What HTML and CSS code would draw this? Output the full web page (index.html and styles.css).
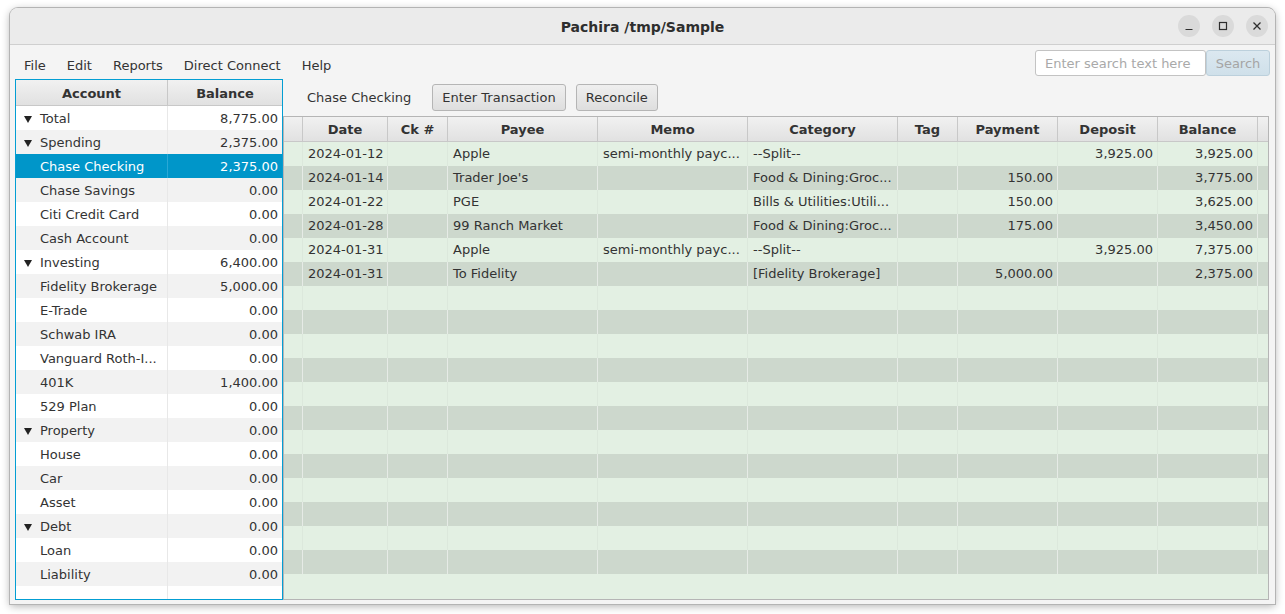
FILE: index.html
```html
<!DOCTYPE html>
<html>
<head>
<meta charset="utf-8">
<link rel="stylesheet" href="styles.css">
</head>
<body>
<div class="window">
  <div class="titlebar">
    <div class="title">Pachira /tmp/Sample</div>
    <div class="wbtns">
      <span class="wbtn"><svg width="10" height="10" viewBox="0 0 10 10"><path d="M1.5 8.5h7" stroke="#2e2e2e" stroke-width="1.2"/></svg></span>
      <span class="wbtn"><svg width="10" height="10" viewBox="0 0 10 10"><rect x="1.5" y="1.5" width="7" height="7" fill="none" stroke="#2e2e2e" stroke-width="1.2"/></svg></span>
      <span class="wbtn"><svg width="10" height="10" viewBox="0 0 10 10"><path d="M1.5 1.5l7 7M8.5 1.5l-7 7" stroke="#2e2e2e" stroke-width="1.3"/></svg></span>
    </div>
  </div>
  <div class="menubar">
    <div class="menus">
      <span class="menu">File</span>
      <span class="menu">Edit</span>
      <span class="menu">Reports</span>
      <span class="menu">Direct Connect</span>
      <span class="menu">Help</span>
    </div>
    <div class="search">
      <div class="field">Enter search text here</div>
      <div class="sbtn">Search</div>
    </div>
  </div>
  <div class="main">
    <div class="tree">
      <div class="thead"><div class="th">Account</div><div class="th">Balance</div></div>
      <div class="tbody">
        <div class="trow"><div class="tc name"><span class="tri"></span>Total</div><div class="tc num">8,775.00</div></div>
        <div class="trow"><div class="tc name"><span class="tri"></span>Spending</div><div class="tc num">2,375.00</div></div>
        <div class="trow sel"><div class="tc name">Chase Checking</div><div class="tc num">2,375.00</div></div>
        <div class="trow"><div class="tc name">Chase Savings</div><div class="tc num">0.00</div></div>
        <div class="trow"><div class="tc name">Citi Credit Card</div><div class="tc num">0.00</div></div>
        <div class="trow"><div class="tc name">Cash Account</div><div class="tc num">0.00</div></div>
        <div class="trow"><div class="tc name"><span class="tri"></span>Investing</div><div class="tc num">6,400.00</div></div>
        <div class="trow"><div class="tc name">Fidelity Brokerage</div><div class="tc num">5,000.00</div></div>
        <div class="trow"><div class="tc name">E-Trade</div><div class="tc num">0.00</div></div>
        <div class="trow"><div class="tc name">Schwab IRA</div><div class="tc num">0.00</div></div>
        <div class="trow"><div class="tc name">Vanguard Roth-I...</div><div class="tc num">0.00</div></div>
        <div class="trow"><div class="tc name">401K</div><div class="tc num">1,400.00</div></div>
        <div class="trow"><div class="tc name">529 Plan</div><div class="tc num">0.00</div></div>
        <div class="trow"><div class="tc name"><span class="tri"></span>Property</div><div class="tc num">0.00</div></div>
        <div class="trow"><div class="tc name">House</div><div class="tc num">0.00</div></div>
        <div class="trow"><div class="tc name">Car</div><div class="tc num">0.00</div></div>
        <div class="trow"><div class="tc name">Asset</div><div class="tc num">0.00</div></div>
        <div class="trow"><div class="tc name"><span class="tri"></span>Debt</div><div class="tc num">0.00</div></div>
        <div class="trow"><div class="tc name">Loan</div><div class="tc num">0.00</div></div>
        <div class="trow"><div class="tc name">Liability</div><div class="tc num">0.00</div></div>
        <div class="trow"><div class="tc name"></div><div class="tc num"></div></div>
      </div>
    </div>
    <div class="right">
      <div class="toolbar">
        <span class="acct">Chase Checking</span>
        <span class="btn">Enter Transaction</span>
        <span class="btn">Reconcile</span>
      </div>
      <div class="table">
        <div class="grow ghead">
          <div class="gh"></div><div class="gh">Date</div><div class="gh">Ck #</div><div class="gh">Payee</div><div class="gh">Memo</div><div class="gh">Category</div><div class="gh">Tag</div><div class="gh">Payment</div><div class="gh">Deposit</div><div class="gh">Balance</div><div class="gh"></div>
        </div>
        <div class="grow">
          <div class="gc"></div><div class="gc">2024-01-12</div><div class="gc"></div><div class="gc">Apple</div><div class="gc">semi-monthly payc...</div><div class="gc">--Split--</div><div class="gc"></div><div class="gc r"></div><div class="gc r">3,925.00</div><div class="gc r">3,925.00</div><div class="gc"></div>
        </div>
        <div class="grow">
          <div class="gc"></div><div class="gc">2024-01-14</div><div class="gc"></div><div class="gc">Trader Joe's</div><div class="gc"></div><div class="gc">Food &amp; Dining:Groc...</div><div class="gc"></div><div class="gc r">150.00</div><div class="gc r"></div><div class="gc r">3,775.00</div><div class="gc"></div>
        </div>
        <div class="grow">
          <div class="gc"></div><div class="gc">2024-01-22</div><div class="gc"></div><div class="gc">PGE</div><div class="gc"></div><div class="gc">Bills &amp; Utilities:Utili...</div><div class="gc"></div><div class="gc r">150.00</div><div class="gc r"></div><div class="gc r">3,625.00</div><div class="gc"></div>
        </div>
        <div class="grow">
          <div class="gc"></div><div class="gc">2024-01-28</div><div class="gc"></div><div class="gc">99 Ranch Market</div><div class="gc"></div><div class="gc">Food &amp; Dining:Groc...</div><div class="gc"></div><div class="gc r">175.00</div><div class="gc r"></div><div class="gc r">3,450.00</div><div class="gc"></div>
        </div>
        <div class="grow">
          <div class="gc"></div><div class="gc">2024-01-31</div><div class="gc"></div><div class="gc">Apple</div><div class="gc">semi-monthly payc...</div><div class="gc">--Split--</div><div class="gc"></div><div class="gc r"></div><div class="gc r">3,925.00</div><div class="gc r">7,375.00</div><div class="gc"></div>
        </div>
        <div class="grow">
          <div class="gc"></div><div class="gc">2024-01-31</div><div class="gc"></div><div class="gc">To Fidelity</div><div class="gc"></div><div class="gc">[Fidelity Brokerage]</div><div class="gc"></div><div class="gc r">5,000.00</div><div class="gc r"></div><div class="gc r">2,375.00</div><div class="gc"></div>
        </div>
        <div class="grow"><div class="gc"></div><div class="gc"></div><div class="gc"></div><div class="gc"></div><div class="gc"></div><div class="gc"></div><div class="gc"></div><div class="gc"></div><div class="gc"></div><div class="gc"></div><div class="gc"></div></div>
        <div class="grow"><div class="gc"></div><div class="gc"></div><div class="gc"></div><div class="gc"></div><div class="gc"></div><div class="gc"></div><div class="gc"></div><div class="gc"></div><div class="gc"></div><div class="gc"></div><div class="gc"></div></div>
        <div class="grow"><div class="gc"></div><div class="gc"></div><div class="gc"></div><div class="gc"></div><div class="gc"></div><div class="gc"></div><div class="gc"></div><div class="gc"></div><div class="gc"></div><div class="gc"></div><div class="gc"></div></div>
        <div class="grow"><div class="gc"></div><div class="gc"></div><div class="gc"></div><div class="gc"></div><div class="gc"></div><div class="gc"></div><div class="gc"></div><div class="gc"></div><div class="gc"></div><div class="gc"></div><div class="gc"></div></div>
        <div class="grow"><div class="gc"></div><div class="gc"></div><div class="gc"></div><div class="gc"></div><div class="gc"></div><div class="gc"></div><div class="gc"></div><div class="gc"></div><div class="gc"></div><div class="gc"></div><div class="gc"></div></div>
        <div class="grow"><div class="gc"></div><div class="gc"></div><div class="gc"></div><div class="gc"></div><div class="gc"></div><div class="gc"></div><div class="gc"></div><div class="gc"></div><div class="gc"></div><div class="gc"></div><div class="gc"></div></div>
        <div class="grow"><div class="gc"></div><div class="gc"></div><div class="gc"></div><div class="gc"></div><div class="gc"></div><div class="gc"></div><div class="gc"></div><div class="gc"></div><div class="gc"></div><div class="gc"></div><div class="gc"></div></div>
        <div class="grow"><div class="gc"></div><div class="gc"></div><div class="gc"></div><div class="gc"></div><div class="gc"></div><div class="gc"></div><div class="gc"></div><div class="gc"></div><div class="gc"></div><div class="gc"></div><div class="gc"></div></div>
        <div class="grow"><div class="gc"></div><div class="gc"></div><div class="gc"></div><div class="gc"></div><div class="gc"></div><div class="gc"></div><div class="gc"></div><div class="gc"></div><div class="gc"></div><div class="gc"></div><div class="gc"></div></div>
        <div class="grow"><div class="gc"></div><div class="gc"></div><div class="gc"></div><div class="gc"></div><div class="gc"></div><div class="gc"></div><div class="gc"></div><div class="gc"></div><div class="gc"></div><div class="gc"></div><div class="gc"></div></div>
        <div class="grow"><div class="gc"></div><div class="gc"></div><div class="gc"></div><div class="gc"></div><div class="gc"></div><div class="gc"></div><div class="gc"></div><div class="gc"></div><div class="gc"></div><div class="gc"></div><div class="gc"></div></div>
        <div class="grow"><div class="gc"></div><div class="gc"></div><div class="gc"></div><div class="gc"></div><div class="gc"></div><div class="gc"></div><div class="gc"></div><div class="gc"></div><div class="gc"></div><div class="gc"></div><div class="gc"></div></div>
      </div>
    </div>
  </div>
</div>
</body>
</html>
```
FILE: styles.css
```css
* { box-sizing: border-box; }
html, body { margin: 0; padding: 0; background: #ffffff; }
body {
  font-family: "DejaVu Sans", "Liberation Sans", sans-serif;
  font-size: 13px;
  color: #333333;
  padding: 8px 10px 0 10px;
  height: 614px;
  overflow: hidden;
}
.window {
  width: 1265px;
  height: 596px;
  background: #f4f4f4;
  border-radius: 8px 8px 0 0;
  box-shadow: 0 0 0 1px #b4b4b4, 0 2px 9px rgba(0,0,0,0.32);
  display: flex;
  flex-direction: column;
  overflow: hidden;
}
.titlebar {
  height: 37px;
  flex: none;
  background: #ebebeb;
  border-bottom: 1px solid #cfcfcf;
  display: flex;
  align-items: center;
  justify-content: center;
  position: relative;
  padding-top: 2px;
}
.title { font-weight: bold; font-size: 14px; color: #2e2e2e; }
.wbtns {
  position: absolute;
  right: 7px;
  top: 7px;
  display: flex;
  gap: 12px;
}
.wbtn {
  width: 22px; height: 22px;
  border-radius: 50%;
  background: #dadada;
  display: flex; align-items: center; justify-content: center;
}
.menubar {
  height: 34px;
  flex: none;
  display: flex;
  align-items: flex-start;
  justify-content: space-between;
  padding: 0 5px 0 4px;
}
.menus { display: flex; padding-top: 13px; }
.menu { padding: 0 10.5px; line-height: 16px; }
.menu:first-child { padding-left: 10px; }
.search { display: flex; padding-top: 5px; }
.field {
  width: 171px; height: 26px;
  background: #fff;
  border: 1px solid #c3c3c3;
  border-radius: 3px;
  color: #a9a9a9;
  padding-left: 9px;
  padding-top: 1px;
  line-height: 24px;
}
.sbtn {
  width: 64px; height: 26px;
  background: linear-gradient(#dbe8f0, #cfe0ea);
  border: 1px solid #bcd0dc;
  border-radius: 3px;
  color: #a5a5a5;
  text-align: center;
  padding-top: 1px;
  line-height: 24px;
}
.main {
  flex: none;
  height: 521px;
  display: flex;
  padding-left: 5px;
}
.tree {
  width: 268px;
  height: 521px;
  border: 1px solid #039ed3;
  background: #fff;
  overflow: hidden;
  flex: none;
}
.thead {
  display: grid;
  grid-template-columns: 152px 114px;
  height: 26px;
  background: linear-gradient(#f1f1f1, #e1e1e1);
  border-bottom: 1px solid #c8c8c8;
}
.th {
  font-weight: bold;
  text-align: center;
  line-height: 25px;
  padding-top: 1px;
  border-right: 1px solid #c8c8c8;
  color: #333;
}
.th:last-child { border-right: none; }
.trow {
  display: grid;
  grid-template-columns: 152px 114px;
  height: 24px;
  background: #ffffff;
}
.trow:nth-child(even) { background: #f2f2f2; }
.trow.sel { background: #0096c9; color: #fff; }
.tc {
  border-right: 1px solid #e8e8e8;
  white-space: nowrap;
  overflow: hidden;
  line-height: 24px;
  padding-top: 1px;
}
.tc:last-child { border-right: none; }
.trow.sel .tc { border-right-color: #2aa8d6; }
.name { padding-left: 24px; position: relative; }
.num { text-align: right; padding-right: 4px; }
.tri {
  position: absolute;
  left: 8px;
  top: 10px;
  width: 0; height: 0;
  border-left: 4.5px solid transparent;
  border-right: 4.5px solid transparent;
  border-top: 7px solid #222;
}
.right {
  width: 987px;
  flex: none;
  display: flex;
  flex-direction: column;
}
.toolbar {
  height: 37px;
  flex: none;
  display: flex;
  align-items: center;
  padding-left: 24px;
}
.acct { margin-right: 21px; }
.btn {
  height: 27px;
  line-height: 25px;
  padding: 0 9px;
  background: linear-gradient(#efefef, #dedede);
  border: 1px solid #b5b5b5;
  border-radius: 3px;
  margin-right: 10px;
}
.table {
  width: 986px;
  height: 484px;
  border: 1px solid #b5b5b5;
  background: #e3f0e3;
  overflow: hidden;
}
.grow {
  display: grid;
  grid-template-columns: 19px 85px 60px 150px 150px 150px 60px 100px 100px 100px 10px;
  height: 24px;
  line-height: 24px;
  background: #e3f0e3;
}
.grow:nth-child(odd) { background: #cdd8cd; }
.ghead {
  height: 25px !important;
  background: linear-gradient(#f1f1f1, #e1e1e1) !important;
  border-bottom: 1px solid #c8c8c8;
}
.gh {
  font-weight: bold;
  text-align: center;
  border-right: 1px solid #c8c8c8;
  line-height: 24px;
  padding-top: 1px;
}
.gh:last-child { border-right: none; }
.gc {
  border-right: 1px solid #dce8dc;
  padding: 0 5px;
  white-space: nowrap;
  overflow: hidden;
}
.grow:nth-child(odd) .gc { border-right-color: #e6ebe6; }
.gc:last-child { border-right: none; }
.gc.r { text-align: right; padding-right: 4px; }
```
